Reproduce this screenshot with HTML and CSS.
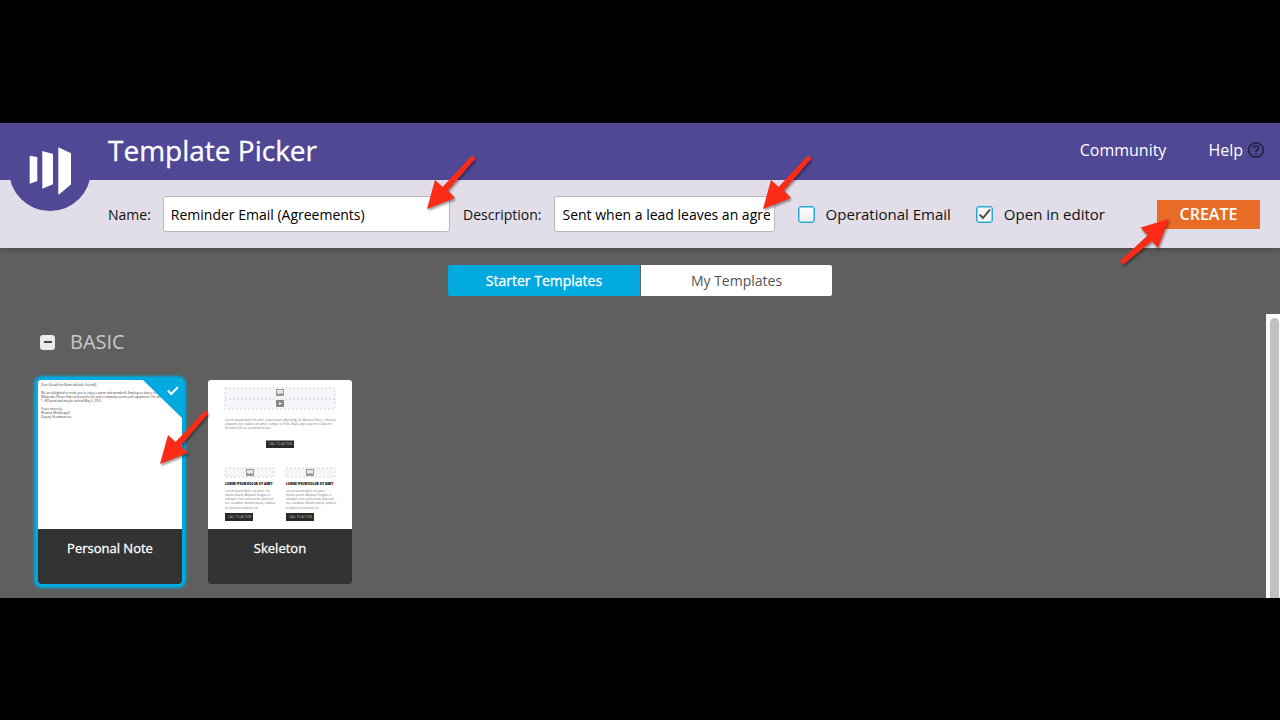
FILE: index.html
```html
<!DOCTYPE html>
<html lang="en">
<head>
<meta charset="utf-8">
<title>Template Picker</title>
<link rel="stylesheet" href="styles.css">
</head>
<body>
<svg class="defs" aria-hidden="true">
  <symbol id="arrow" viewBox="0 0 50 56">
    <path d="M0 54 8 25 15.500 32 45 .5 48.500 3.500 21 35.500 28 43Z"/>
  </symbol>
  <symbol id="picture" viewBox="0 0 8 7">
    <rect width="8" height="7" fill="#999"/><path d="M1 1h6v4L5 4 3 5 1 4Z" fill="#e8e8e8"/>
  </symbol>
</svg>
<main class="app">
  <header class="header">
    <svg class="logo" viewBox="9 129 82 82" role="img" aria-label="Logo">
      <circle cx="50" cy="170" r="41" fill="#504895"/>
      <path fill="#fff" d="M29.700 155.700 37.300 157V181L29.700 183.700ZM42.300 151 53 154V184.300L42.300 188.700ZM58.300 147.300 71 153.300V184.500L58.300 195Z"/>
    </svg>
    <h1 class="title">Template Picker</h1>
    <nav class="nav">
      <a class="nav-link" href="#">Community</a>
      <a class="nav-link" href="#">Help
        <svg class="help-icon" viewBox="0 0 16 16" aria-hidden="true"><circle cx="8" cy="8" r="7.200"/><path d="M5.500 6.300C5.500 3.400 10.600 3.400 10.500 6.200 10.400 8 8 7.900 8 10M8 11.200V12.700"/></svg>
      </a>
    </nav>
  </header>
  <form class="toolbar">
    <label class="label" for="name">Name:</label>
    <div class="field field-name">
      <input class="input" id="name" type="text" value="Reminder Email (Agreements)">
      <svg class="arrow arrow-name" aria-hidden="true"><use href="#arrow"/></svg>
    </div>
    <label class="label" for="description">Description:</label>
    <div class="field field-description">
      <input class="input" id="description" type="text" value="Sent when a lead leaves an agreement">
      <svg class="arrow arrow-description" aria-hidden="true"><use href="#arrow"/></svg>
    </div>
    <label class="check"><input class="box" type="checkbox">Operational Email</label>
    <label class="check"><input class="box" type="checkbox" checked>Open in editor</label>
    <div class="action">
      <button class="create" type="button">CREATE</button>
      <svg class="arrow arrow-create" viewBox="0 0 50 46" aria-hidden="true"><path d="M50 0 21.500 8.500 28.500 16.500 1 42 4 46 33 22 39 29Z"/></svg>
    </div>
  </form>
  <div class="tabs">
    <button class="tab tab-active" type="button">Starter Templates</button>
    <button class="tab" type="button">My Templates</button>
  </div>
  <section class="gallery">
    <div class="group">
      <div class="group-head">
        <button class="toggle" type="button" aria-label="Collapse Basic"></button>
        <h2 class="group-title">BASIC</h2>
      </div>
      <div class="cards">
        <article class="card card-selected">
          <svg class="preview" viewBox="0 0 144 149" aria-hidden="true">
            <rect width="144" height="149" fill="#fff"/>
            <g class="tiny">
              <text x="3" y="6">Dear {{lead.First Name:default=Friend}},</text>
              <text x="3" y="14">We are delighted to invite you to enjoy a warm and wonderful Employees dance of Milwau</text>
              <text x="3" y="18">Wikipedia. Please find enclosed the list and a company events and equipment. The dinner</text>
              <text x="3" y="22">1. $50 paid and may be invited May 5, 2015</text>
              <text x="3" y="30">Yours sincerely,</text>
              <text x="3" y="34">Rhianna McGonagall</text>
              <text x="3" y="38">Deputy Headmistress</text>
            </g>
            <path d="M105 0H144V38Z" fill="#00a9de"/>
            <path d="M130 10.500 133.200 14 140 7" fill="none" stroke="#fff" stroke-width="2"/>
          </svg>
          <h3 class="card-title">Personal Note</h3>
          <svg class="arrow arrow-card" aria-hidden="true"><use href="#arrow"/></svg>
        </article>
        <article class="card">
          <svg class="preview" viewBox="0 0 144 149" aria-hidden="true">
            <rect width="144" height="149" fill="#fff"/>
            <g fill="#f6f6fa" stroke="#ccc" stroke-width=".8" stroke-dasharray="2 2">
              <path d="M17 8H127V29H17ZM17 19H127M17 88H66V97H17ZM78 88H127V97H78Z"/>
            </g>
            <use href="#picture" x="68" y="9" width="8" height="7"/>
            <path d="M68 20h8v7h-8Z" fill="#888"/><path d="M71 22 74 23.500 71 25Z" fill="#eee"/>
            <use href="#picture" x="38" y="89" width="8" height="7"/>
            <use href="#picture" x="98" y="89" width="8" height="7"/>
            <g class="tiny tiny-light">
              <text x="17" y="41">Lorem ipsum dolor sit amet, consectetur adipiscing elit. Aenean libero, vehicula</text>
              <text x="17" y="45">aliquam erat, sodales sit amet, congue vel felis. Nulla eget sapien vel lobortis</text>
              <text x="17" y="49">Sit amet felis at accumsan lectus.</text>
              <text x="17" y="112">Lorem ipsum dolor sit amet, elit</text>
              <text x="17" y="116">mattis ipsum. Aliquam feugiat et</text>
              <text x="17" y="120">volutpat, non consectetur placerat</text>
              <text x="17" y="124">nec curabitur dictum purus, sodales</text>
              <text x="17" y="129">ut pharetra molestie sit.</text>
              <text x="78" y="112">Lorem ipsum dolor sit amet,</text>
              <text x="78" y="116">mattis ipsum. Aliquam feugiat et</text>
              <text x="78" y="120">volutpat, non consectetur placerat</text>
              <text x="78" y="124">nec curabitur dictum purus, sodales</text>
              <text x="78" y="129">ut pharetra molestie sit.</text>
            </g>
            <g class="tiny tiny-bold">
              <text x="17" y="105">LOREM IPSUM DOLOR SIT AMET</text>
              <text x="78" y="105">LOREM IPSUM DOLOR SIT AMET</text>
            </g>
            <path d="M58 60.500H86V68H58ZM17 133H45V141H17ZM78 133H106V141H78Z" fill="#292929"/>
            <g class="tiny tiny-button">
              <text x="61" y="65">CALL TO ACTION</text>
              <text x="20" y="138">CALL TO ACTION</text>
              <text x="81" y="138">CALL TO ACTION</text>
            </g>
          </svg>
          <h3 class="card-title">Skeleton</h3>
        </article>
      </div>
    </div>
    <div class="scrollbar"><div class="thumb"></div></div>
  </section>
</main>
</body>
</html>
```
FILE: styles.css
```css
* {
  box-sizing: border-box;
}

body {
  min-height: 100vh;
  margin: 0;
  display: flex;
  flex-direction: column;
  justify-content: center;
  background: #000;
  font-family: "Open Sans", "Noto Sans", sans-serif;
}

button,
input {
  font-family: inherit;
}

.defs {
  position: absolute;
  width: 0;
  height: 0;
}

.app {
  display: flex;
  flex-direction: column;
  margin-top: 1px;
  background: #5f5f5f;
  overflow: hidden;
}

.header {
  position: relative;
  display: flex;
  align-items: center;
  justify-content: space-between;
  height: 57px;
  padding: 0 16px 4px 108px;
  background: #504895;
}

.logo {
  position: absolute;
  left: 9px;
  top: 6px;
  width: 82px;
  height: 82px;
  z-index: 1;
}

.title {
  margin: 0;
  color: #fff;
  font-size: 28px;
  line-height: 40px;
  font-weight: 400;
  -webkit-text-stroke: 0.3px #fff;
}

.nav {
  display: flex;
  gap: 42px;
}

.nav-link {
  display: flex;
  align-items: center;
  gap: 5px;
  color: #fff;
  font-size: 16px;
  line-height: 20px;
  text-decoration: none;
}

.help-icon {
  width: 16px;
  height: 16px;
  fill: none;
  stroke: #292650;
  stroke-width: 2;
}

.toolbar {
  display: flex;
  align-items: center;
  height: 68px;
  padding: 0 20px 0 108px;
  background: #e1dee9;
  color: #111;
  font-size: 15px;
  box-shadow: 0 1px 6px #444;
}

.label {
  padding-top: 2px;
  font-size: 14px;
  line-height: 20px;
}

.field {
  position: relative;
  min-width: 0;
}

.field-name {
  flex: 287 1 0;
  margin: 0 13px 0 12px;
}

.field-description {
  flex: 220 1 0;
  margin: 0 23px 0 13px;
}

.input {
  display: block;
  width: 100%;
  height: 36px;
  padding: 0 4px 0 7px;
  border: 1px solid #b9b8bd;
  border-radius: 3px;
  background: #fff;
  color: #000;
  font-size: 14px;
}

.check {
  display: flex;
  align-items: center;
  gap: 11px;
  margin-right: 25px;
  line-height: 20px;
  white-space: nowrap;
}

.box {
  appearance: none;
  width: 17px;
  height: 17px;
  margin: 0;
  border: 1px solid #2aa5cd;
  border-radius: 3px;
  background: linear-gradient(#fff, #eee);
  box-shadow: inset 0 0 0 1px #8fd0e6;
}

.box:checked {
  background: url("data:image/svg+xml,%3Csvg xmlns='http://www.w3.org/2000/svg' viewBox='0 0 15 15'%3E%3Cpath d='M2.500 7.500 6 11 13 2.500' fill='none' stroke='%23555' stroke-width='2'/%3E%3C/svg%3E") center / 15px 15px #f7f7f7;
}

.action {
  position: relative;
  margin-left: 27px;
}

.create {
  display: block;
  width: 103px;
  height: 29px;
  padding: 0;
  border: 0;
  background: #e86c26;
  color: #fff;
  font-size: 16px;
  font-weight: 600;
}

.arrow {
  position: absolute;
  z-index: 2;
  width: 50px;
  height: 56px;
  fill: #fb2b17;
  filter: drop-shadow(1px 2px 1px rgba(0, 0, 0, .4));
  pointer-events: none;
}

.arrow-name {
  right: -27px;
  top: -41px;
}

.arrow-description {
  right: -38px;
  top: -41px;
}

.arrow-create {
  left: -38px;
  top: 19px;
  height: 46px;
}

.arrow-card {
  left: 122px;
  top: 30px;
}

.tabs {
  display: flex;
  justify-content: center;
  gap: 1px;
  padding: 17px 0 18px;
}

.tab {
  width: 191px;
  height: 31px;
  padding: 0;
  border: 0;
  border-radius: 0 2px 2px 0;
  background: #fff;
  color: #555;
  font-size: 14px;
}

.tab-active {
  width: 192px;
  border-radius: 2px 0 0 2px;
  background: #00a9de;
  color: #fff;
  -webkit-text-stroke: 0.3px #fff;
}

.gallery {
  display: flex;
}

.group {
  flex: 1;
  padding: 14px 38px;
}

.group-head {
  display: flex;
  align-items: center;
  gap: 15px;
  margin-bottom: 24px;
  padding-left: 2px;
}

.toggle {
  display: flex;
  align-items: center;
  justify-content: center;
  width: 15px;
  height: 15px;
  padding: 0;
  border: 0;
  border-radius: 3px;
  background: #eaeaea;
}

.toggle::before {
  content: "";
  width: 8px;
  height: 2px;
  background: #444;
}

.group-title {
  margin: 0;
  color: #c8c8c8;
  font-size: 20px;
  line-height: 28px;
  font-weight: 400;
}

.cards {
  display: flex;
  gap: 26px;
}

.card {
  position: relative;
  width: 144px;
  height: 204px;
  border-radius: 4px;
  background: #333;
}

.card-selected {
  box-shadow: 0 0 0 3px #00a9de, 0 0 3px 4px #00a9de;
}

.preview {
  display: block;
  width: 144px;
  height: 149px;
  border-radius: 3px 3px 0 0;
}

.card-title {
  margin: 0;
  padding-top: 9px;
  color: #fff;
  font-size: 13px;
  line-height: 20px;
  font-weight: 400;
  text-align: center;
  -webkit-text-stroke: 0.3px #fff;
}

.tiny {
  fill: #333;
  font-size: 3px;
}

.tiny-light {
  fill: #777;
}

.tiny-bold {
  fill: #000;
  font-weight: 800;
}

.tiny-button {
  fill: #bbb;
}

.scrollbar {
  display: flex;
  width: 14px;
  padding: 4px 1px 0 4px;
  background: #fafafa;
}

.thumb {
  flex: 1;
  border-radius: 5px 5px 0 0;
  background: #c1c1c1;
}
```
